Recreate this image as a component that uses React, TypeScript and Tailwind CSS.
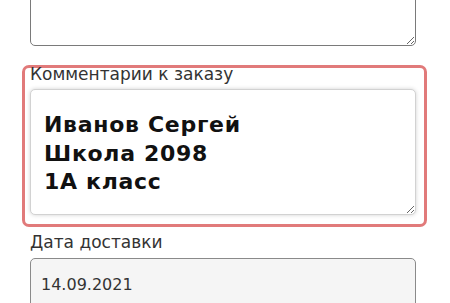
const font = { fontFamily: '"DejaVu Sans", sans-serif' };

export default function App() {
  return (
    <div style={font} className="w-[450px] h-[303px] overflow-hidden bg-white">
      <div className="pl-[30px]">
        <textarea
          readOnly
          className="-mt-[34px] block h-[80px] w-[386px] rounded-[5px] border border-[#7a7a7a] bg-white outline-none"
        />
      </div>

      <div className="ml-[22px] mt-[19px] w-[405px] rounded-[7px] border-[3px] border-[#e17a7a] pb-[9px] pl-[5px] pr-[8px]">
        <label className="-mt-[4px] block text-[17px] leading-[20px] text-[#333]">
          Комментарии к заказу
        </label>
        <textarea
          readOnly
          defaultValue={'Иванов Сергей\nШкола 2098\n1А класс'}
          className="mt-[5px] block h-[126px] w-[386px] rounded-[5px] border border-[#d2d2d2] bg-white pl-[13px] pt-[21px] text-[22px] font-bold leading-[28.5px] tracking-[0.7px] text-[#111] shadow-[0_0_4px_rgba(0,0,0,0.18)] outline-none"
          style={font}
        />
      </div>

      <div className="pl-[30px]">
        <label className="mt-[5px] block text-[17px] leading-[20px] text-[#333]">
          Дата доставки
        </label>
        <input
          readOnly
          value="14.09.2021"
          style={font}
          className="mt-[6px] block h-[50px] w-[386px] rounded-[5px] border border-[#8a8a8a] bg-[#f5f5f5] pl-[10px] pt-[3px] text-[16px] leading-[20px] text-[#333] outline-none"
        />
      </div>
    </div>
  );
}
